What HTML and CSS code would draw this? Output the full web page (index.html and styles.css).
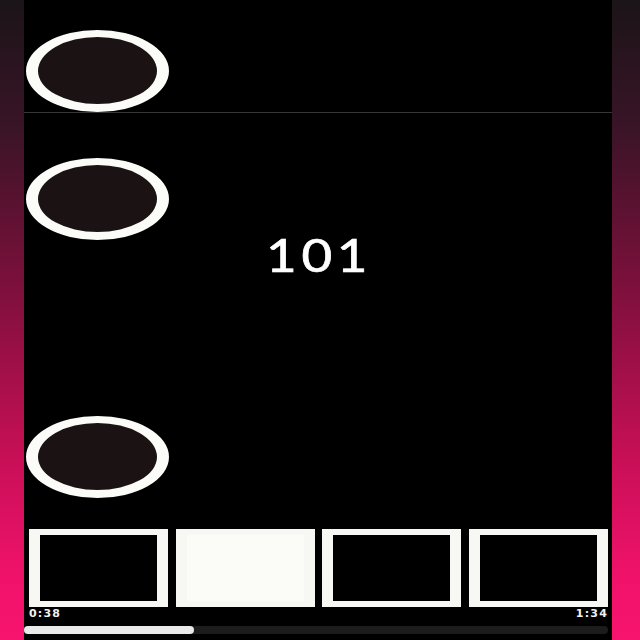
FILE: index.html
```html
<!DOCTYPE html>
<html>
<head>
<meta charset="utf-8">
<link rel="stylesheet" href="styles.css">
</head>
<body>
<div class="screen">
  <section class="top">
    <div class="ring"></div>
  </section>
  <section class="middle">
    <div class="ring ring-2"></div>
    <div class="count"><span>101</span></div>
    <div class="ring ring-3"></div>
  </section>
  <section class="strip">
    <div class="frame"></div>
    <div class="frame active"></div>
    <div class="frame"></div>
    <div class="frame"></div>
  </section>
  <div class="times">
    <span>0:38</span>
    <span>1:34</span>
  </div>
  <div class="track"><div class="fill" style="width:170px"></div></div>
</div>
</body>
</html>
```
FILE: styles.css
```css
html, body {
  margin: 0;
  padding: 0;
  width: 640px;
  height: 640px;
  overflow: hidden;
}
body {
  background: linear-gradient(to bottom, #1b1418 0%, #3a1427 20%, #7d103c 45%, #c40f55 70%, #f0126a 90%, #f7146e 100%);
  font-family: "Lato", "Liberation Sans", sans-serif;
}
.screen {
  margin-left: 24px;
  width: 588px;
  height: 640px;
  background: #000;
  display: flex;
  flex-direction: column;
}
.top {
  height: 113px;
  border-bottom: 1px solid #363636;
  box-sizing: border-box;
  padding-top: 30px;
  padding-left: 2px;
}
.ring {
  width: 143px;
  height: 82px;
  box-sizing: border-box;
  border-style: solid;
  border-color: #fbfbf8;
  border-width: 7px 12px 8px 12px;
  border-radius: 50%;
  background: #1a1213;
}
.middle {
  padding-left: 2px;
  padding-top: 45px;
  display: flex;
  flex-direction: column;
}
.count {
  color: #fff;
  font-size: 46px;
  font-weight: 400;
  line-height: 36px;
  height: 36px;
  text-align: center;
  padding-left: 0;
  margin-top: -3px;
}
.count span {
  display: inline-block;
  letter-spacing: 4px;
  transform: scaleX(1.15);
  -webkit-text-stroke: 0.7px #fff;
}
.ring-3 {
  margin-top: 143px;
}
.strip {
  margin-top: 31px;
  padding-left: 5px;
  display: grid;
  grid-template-columns: repeat(4, 139px);
  column-gap: 7.67px;
}
.frame {
  height: 78px;
  box-sizing: border-box;
  border-style: solid;
  border-color: #f7f7f4;
  border-width: 6px 11px;
  background: #000;
}
.frame.active {
  background: #fbfbf8;
}
.times {
  display: flex;
  justify-content: space-between;
  padding: 0 4px 0 5px;
  color: #f2f2f2;
  font-family: "DejaVu Sans", sans-serif;
  font-weight: 700;
  font-size: 11px;
  letter-spacing: 1.2px;
  line-height: 13px;
  height: 13px;
  margin-top: 0;
}
.track {
  margin-top: 6px;
  width: 584px;
  height: 8px;
  border-radius: 4px;
  background: #1c1c1c;
}
.fill {
  height: 8px;
  border-radius: 4px;
  background: #e9e9e9;
}
```
